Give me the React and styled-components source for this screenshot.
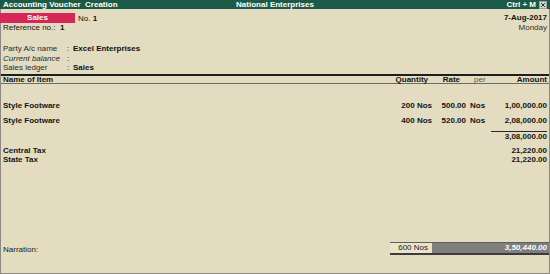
import React from "react";
import styled, { createGlobalStyle } from "styled-components";

const Global = createGlobalStyle`
  html, body { margin: 0; padding: 0; background: #e3dcc0; }
  body { font-family: "Liberation Sans", Arial, sans-serif; font-size: 8px; color: #141414; }
  * { box-sizing: border-box; }
`;

const Screen = styled.div`
  width: 550px;
  height: 274px;
  display: flex;
  flex-direction: column;
  background: #e3dcc0;
  overflow: hidden;
`;

const TitleBar = styled.div`
  height: 9px;
  background: #1c5a48;
  color: #ffffff;
  font-weight: bold;
  font-size: 8px;
  line-height: 9px;
  display: grid;
  grid-template-columns: 1fr auto 1fr;
  align-items: center;
  padding: 0 3px 0 3px;
`;

const TitleRight = styled.div`
  display: flex;
  justify-content: flex-end;
  align-items: center;
  gap: 3px;
`;

const CloseBox = styled.svg`
  width: 8px;
  height: 8px;
  display: block;
`;

const Body = styled.div`
  flex: 1;
  display: flex;
  flex-direction: column;
  border-left: 1px solid #8c8a80;
  border-right: 1px solid #8c8a80;
  border-bottom: 1px solid #8c8a80;
`;

const VoucherHead = styled.div`
  display: flex;
  justify-content: space-between;
  padding-top: 4px;
`;

const HeadLeft = styled.div`
  display: flex;
  flex-direction: column;
`;

const HeadRight = styled.div`
  display: flex;
  flex-direction: column;
  align-items: flex-end;
  padding-right: 2px;
`;

const TypeRow = styled.div`
  display: flex;
  align-items: center;
  height: 10px;
  gap: 3px;
`;

const Badge = styled.div`
  width: 75px;
  height: 10px;
  margin-left: -1px;
  background: #d6265a;
  color: #fff;
  font-weight: bold;
  text-align: center;
  line-height: 10px;
`;

const Line = styled.div`
  height: 10px;
  line-height: 10px;
  padding-left: 2px;
  white-space: nowrap;
`;

const Strong = styled.b`
  font-weight: bold;
  color: #111;
`;

const DateText = styled.div`
  font-weight: bold;
  height: 10px;
  line-height: 10px;
`;

const DayText = styled.div`
  height: 10px;
  line-height: 10px;
  color: #333;
`;

const PartyBlock = styled.div`
  margin-top: 11px;
  display: flex;
  flex-direction: column;
`;

const FieldRow = styled.div`
  display: grid;
  grid-template-columns: 64px 6px auto;
  height: 9.5px;
  line-height: 9.5px;
  padding-left: 2px;
`;

const Label = styled.span`
  color: #2a2a2a;
  font-style: ${(p) => (p.$italic ? "italic" : "normal")};
`;

const Items = styled.div`
  flex: 1;
  display: flex;
  flex-direction: column;
  margin-top: 1px;
  border-top: 2px solid #1e1e1e;
`;

const Grid = styled.div`
  display: grid;
  grid-template-columns: 1fr 60px 34px 24px 57px;
  padding: 0 2px 0 2px;
  height: ${(p) => p.$h || 10}px;
  line-height: ${(p) => p.$h || 10}px;
  margin-top: ${(p) => p.$mt || 0}px;
  font-weight: ${(p) => (p.$bold ? "bold" : "normal")};
  border-bottom: ${(p) => (p.$rule ? "1px solid #6f6c60" : "none")};
`;

const Cell = styled.div`
  text-align: ${(p) => p.$align || "left"};
  padding-left: ${(p) => p.$pl || 0}px;
  padding-right: ${(p) => p.$pr || 0}px;
  white-space: nowrap;
  font-weight: ${(p) => (p.$light ? "normal" : "inherit")};
  color: ${(p) => (p.$light ? "#555" : "inherit")};
`;

const TotalCell = styled(Cell)`
  border-top: 1px solid #2a2a2a;
  margin-left: 1px;
`;

const Footer = styled.div`
  display: flex;
  align-items: center;
  justify-content: space-between;
  margin-bottom: 18px;
`;

const Narration = styled.div`
  padding-left: 2px;
  padding-top: 1px;
  color: #222;
`;

const TotalBar = styled.div`
  width: 159px;
  display: grid;
  grid-template-columns: 42px 1fr;
  border-top: 1px solid #5e5e5e;
  border-bottom: 2px solid #3c3c3c;
  height: 13px;
  line-height: 10px;
`;

const QtyTotal = styled.div`
  background: #ebe4ca;
  text-align: right;
  padding-right: 4px;
  color: #1a1a1a;
`;

const AmtTotal = styled.div`
  background: #7e7e7e;
  color: #fff;
  font-weight: bold;
  font-style: italic;
  text-align: right;
  padding-right: 2px;
`;

const rows = [
  { name: "Style Footware", qty: "200 Nos", rate: "500.00", per: "Nos", amt: "1,00,000.00" },
  { name: "Style Footware", qty: "400 Nos", rate: "520.00", per: "Nos", amt: "2,08,000.00" },
];

export default function App() {
  return (
    <Screen>
      <Global />
      <TitleBar>
        <span>Accounting Voucher&nbsp; Creation</span>
        <span>National Enterprises</span>
        <TitleRight>
          <span>Ctrl + M</span>
          <CloseBox viewBox="0 0 8 8">
            <rect x="0.5" y="0.5" width="7" height="7" fill="#cfd2cc" stroke="#9aa39e" />
            <path d="M2.2 2.2 L5.8 5.8 M5.8 2.2 L2.2 5.8" stroke="#1c3a30" strokeWidth="1" />
          </CloseBox>
        </TitleRight>
      </TitleBar>
      <Body>
        <VoucherHead>
          <HeadLeft>
            <TypeRow>
              <Badge>Sales</Badge>
              <span>
                No. <Strong>1</Strong>
              </span>
            </TypeRow>
            <Line>
              Reference no.: <Strong>&nbsp;1</Strong>
            </Line>
          </HeadLeft>
          <HeadRight>
            <DateText>7-Aug-2017</DateText>
            <DayText>Monday</DayText>
          </HeadRight>
        </VoucherHead>
        <PartyBlock>
          <FieldRow>
            <Label>Party A/c name</Label>
            <span>:</span>
            <Strong>Excel Enterprises</Strong>
          </FieldRow>
          <FieldRow>
            <Label $italic>Current balance</Label>
            <span>:</span>
            <span />
          </FieldRow>
          <FieldRow>
            <Label>Sales ledger</Label>
            <span>:</span>
            <Strong>Sales</Strong>
          </FieldRow>
        </PartyBlock>
        <Items>
          <Grid $bold $h={8} $rule>
            <Cell>Name of Item</Cell>
            <Cell $align="right" $pr={4}>Quantity</Cell>
            <Cell $align="right" $pr={6}>Rate</Cell>
            <Cell $pl={8} $light>per</Cell>
            <Cell $align="right">Amount</Cell>
          </Grid>
          {rows.map((r, i) => (
            <Grid key={i} $bold $mt={i === 0 ? 17 : 5}>
              <Cell>{r.name}</Cell>
              <Cell $align="right">{r.qty}</Cell>
              <Cell $align="right">{r.rate}</Cell>
              <Cell $pl={4}>{r.per}</Cell>
              <Cell $align="right">{r.amt}</Cell>
            </Grid>
          ))}
          <Grid $bold $mt={5}>
            <Cell />
            <Cell />
            <Cell />
            <Cell />
            <TotalCell $align="right">3,08,000.00</TotalCell>
          </Grid>
          <Grid $bold $mt={5} $h={9.5}>
            <Cell>Central Tax</Cell>
            <Cell />
            <Cell />
            <Cell />
            <Cell $align="right">21,220.00</Cell>
          </Grid>
          <Grid $bold $h={9.5}>
            <Cell>State Tax</Cell>
            <Cell />
            <Cell />
            <Cell />
            <Cell $align="right">21,220.00</Cell>
          </Grid>
        </Items>
        <Footer>
          <Narration>Narration:</Narration>
          <TotalBar>
            <QtyTotal>600 Nos</QtyTotal>
            <AmtTotal>3,50,440.00</AmtTotal>
          </TotalBar>
        </Footer>
      </Body>
    </Screen>
  );
}
